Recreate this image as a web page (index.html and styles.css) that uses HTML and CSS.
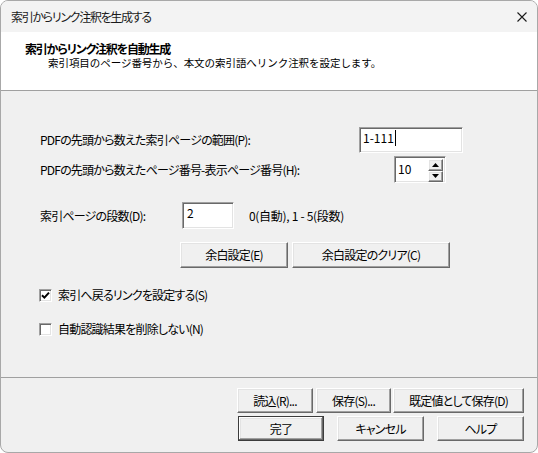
FILE: index.html
```html
<!DOCTYPE html>
<html lang="ja">
<head>
<meta charset="utf-8">
<title>索引からリンク注釈を生成する</title>
<link rel="stylesheet" href="styles.css">
</head>
<body>
<div class="window">
  <div class="titlebar">
    <span class="title">索引からリンク注釈を生成する</span>
    <svg class="close" width="10" height="10" viewBox="0 0 10 10"><path d="M0.5 0.5L9.5 9.5M9.5 0.5L0.5 9.5" stroke="#1a1a1a" stroke-width="1.1" fill="none"/></svg>
  </div>
  <div class="header">
    <div class="h-title">索引からリンク注釈を自動生成</div>
    <div class="h-sub">索引項目のページ番号から、本文の索引語へリンク注釈を設定します。</div>
  </div>
  <div class="body">
    <div class="row row1">
      <span class="label lbl1">PDFの先頭から数えた索引ページの範囲(P):</span>
      <div class="sunken edit1"><span class="val">1-111</span><span class="caret"></span></div>
    </div>
    <div class="row row2">
      <span class="label lbl2">PDFの先頭から数えたページ番号-表示ページ番号(H):</span>
      <div class="sunken spin">
        <span class="val">10</span>
        <div class="spin-btns">
          <div class="spin-btn"><svg width="7" height="4" viewBox="0 0 7 4"><path d="M0 4L3.5 0L7 4Z" fill="#000"/></svg></div>
          <div class="spin-btn"><svg width="7" height="4" viewBox="0 0 7 4"><path d="M0 0L3.5 4L7 0Z" fill="#000"/></svg></div>
        </div>
      </div>
    </div>
    <div class="row row3">
      <span class="label lbl3">索引ページの段数(D):</span>
      <div class="sunken edit3"><span class="val">2</span></div>
      <span class="hint">0(自動), 1 - 5(段数)</span>
    </div>
    <div class="row row4">
      <div class="btn btn-margin">余白設定(E)</div>
      <div class="btn btn-clear">余白設定のクリア(C)</div>
    </div>
    <div class="row cb-row cb1">
      <div class="checkbox"><svg width="9" height="9" viewBox="0 0 9 9"><path d="M1 4.2L3.4 6.6L8 1.6" stroke="#000" stroke-width="2" fill="none"/></svg></div>
      <span class="cb-label">索引へ戻るリンクを設定する(S)</span>
    </div>
    <div class="row cb-row cb2">
      <div class="checkbox"></div>
      <span class="cb-label">自動認識結果を削除しない(N)</span>
    </div>
  </div>
  <div class="footer">
    <div class="frow frow1">
      <div class="btn b-load">読込(R)...</div>
      <div class="btn b-save">保存(S)...</div>
      <div class="btn b-default">既定値として保存(D)</div>
    </div>
    <div class="frow frow2">
      <div class="btn default b-ok">完了</div>
      <div class="btn b-cancel">キャンセル</div>
      <div class="btn b-help">ヘルプ</div>
    </div>
  </div>
</div>
</body>
</html>
```
FILE: styles.css
```css
* { box-sizing: border-box; }
html, body { margin: 0; padding: 0; background: #ffffff; }
body {
  font-family: "Noto Sans CJK JP", "Noto Sans", sans-serif;
  font-size: 12px;
  color: #000;
  font-feature-settings: "palt";
  letter-spacing: -0.8px;
}
.window {
  width: 538px;
  height: 453px;
  border: 1px solid #a8a8a8;
  border-radius: 8px;
  overflow: hidden;
  background: #f0f0f0;
  display: flex;
  flex-direction: column;
}
.titlebar {
  height: 31px;
  flex: none;
  background: #f3f3f3;
  display: flex;
  align-items: center;
  padding: 1px 10px 0 10px;
}
.title { line-height: 16px; color: #1a1a1a; letter-spacing: -1.3px; }
.close { margin-left: auto; }
.header {
  flex: none;
  height: 59px;
  background: #fff;
  border-bottom: 1px solid #a0a0a0;
  padding: 10px 0 0 24px;
}
.h-title { font-weight: bold; line-height: 14px; letter-spacing: -1.2px; }
.h-sub {
  line-height: 12px;
  margin-top: 1px;
  padding-left: 23px;
  font-size: 10.5px;
  letter-spacing: -0.05px;
  font-feature-settings: normal;
}
.body {
  flex: none;
  height: 287px;
  border-bottom: 1px solid #a0a0a0;
  padding-left: 39px;
  display: flex;
  flex-direction: column;
}
.row { display: flex; align-items: center; flex: none; }
.label { line-height: 16px; white-space: nowrap; }
.row1 { margin-top: 36px; height: 26px; }
.lbl1 { width: 319px; }
.row2 { margin-top: 3px; height: 27px; }
.lbl2 { width: 354px; }
.row3 { margin-top: 19px; height: 27px; }
.lbl3 { width: 142px; }
.row4 { margin-top: 13px; height: 26px; padding-left: 140px; gap: 4px; }
.cb1 { margin-top: 19px; height: 16px; }
.cb2 { margin-top: 18px; height: 16px; }

.sunken {
  background: #fff;
  border: 1px solid;
  border-color: #a0a0a0 #ffffff #ffffff #a0a0a0;
  box-shadow: inset 1px 1px #696969, inset -1px -1px #e3e3e3;
  display: flex;
  align-items: flex-start;
  line-height: 16px;
  letter-spacing: 0;
}
.edit1 { width: 104px; height: 26px; padding: 2px 0 0 3px; }
.caret { width: 1px; height: 16px; background: #000; margin-left: 1px; }
.spin { width: 52px; height: 27px; padding: 2px 2px 1px 3px; }
.spin .val { padding-top: 2px; }
.spin-btns {
  margin-left: auto;
  width: 15px;
  height: 23px;
  display: flex;
  flex-direction: column;
}
.spin-btn {
  flex: 1;
  background: #f0f0f0;
  border: 1px solid;
  border-color: #fff #696969 #696969 #fff;
  box-shadow: inset -1px -1px #a0a0a0, inset 1px 1px #e3e3e3;
  display: flex;
  align-items: center;
  justify-content: center;
}
.edit3 { width: 52px; height: 27px; padding: 2px 0 0 4px; }
.hint { margin-left: 15px; line-height: 16px; white-space: nowrap; letter-spacing: -0.3px; }

.btn {
  background: #f0f0f0;
  border: 1px solid;
  border-color: #ffffff #696969 #696969 #ffffff;
  box-shadow: inset -1px -1px #a0a0a0, inset 1px 1px #e3e3e3;
  display: flex;
  align-items: center;
  justify-content: center;
  white-space: nowrap;
  line-height: 16px;
  flex: none;
}
.btn-margin { width: 108px; height: 26px; }
.btn-clear { width: 158px; height: 26px; }

.checkbox {
  width: 13px;
  height: 13px;
  margin-left: -1px;
  background: #fff;
  border: 1px solid;
  border-color: #a0a0a0 #ffffff #ffffff #a0a0a0;
  box-shadow: inset 1px 1px #696969, inset -1px -1px #e3e3e3;
  display: flex;
  align-items: center;
  justify-content: center;
  flex: none;
}
.cb-label { margin-left: 6px; line-height: 16px; white-space: nowrap; }

.footer {
  flex: none;
  height: 74px;
  padding: 10px 13px 0 0;
  display: flex;
  flex-direction: column;
  align-items: flex-end;
}
.frow { display: flex; }
.frow1 { height: 25px; }
.frow2 { height: 25px; margin-top: 3px; gap: 13px; }
.b-load { width: 76px; }
.b-save { width: 75px; margin-left: 3px; }
.b-default { width: 131px; margin-left: 2px; }
.b-ok { width: 86px; }
.b-cancel { width: 87px; }
.b-help { width: 87px; }
.btn.default {
  border: 1px solid #3c3c3c;
  box-shadow: inset -1px -1px #696969, inset 1px 1px #ffffff, inset -2px -2px #a0a0a0, inset 2px 2px #e3e3e3;
}
```
